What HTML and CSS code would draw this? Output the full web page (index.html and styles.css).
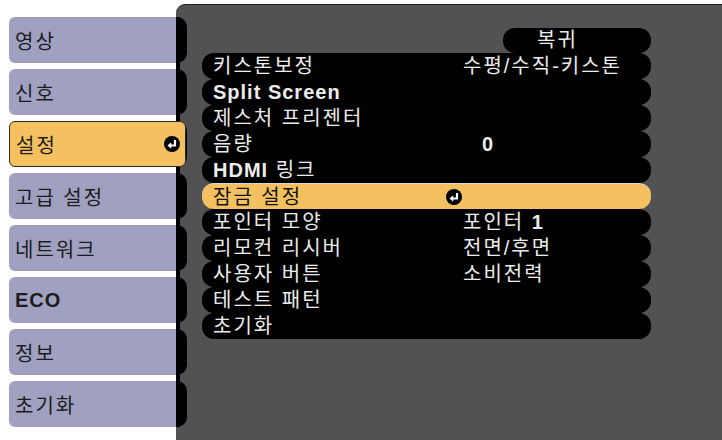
FILE: index.html
```html
<!DOCTYPE html>
<html>
<head>
	<meta charset="UTF-8">
	<title>설정 메뉴</title>
	<link rel="stylesheet" href="styles.css">
</head>
<body>
	<div class="screen">
		<nav class="tabs">
			<div class="tab">영상</div>
			<div class="tab">신호</div>
			<div class="tab active">
				<span>설정</span>
				<svg class="enter" viewBox="0 0 16 16"><circle cx="8" cy="8" r="8" fill="#000"/><path d="M11 4V9.5H6.5" stroke="#fff" stroke-width="2.2" fill="none"/><path d="M3.5 9.5L7.2 6.3V12.7Z" fill="#fff"/></svg>
			</div>
			<div class="tab">고급 설정</div>
			<div class="tab">네트워크</div>
			<div class="tab"><b class="en">ECO</b></div>
			<div class="tab">정보</div>
			<div class="tab">초기화</div>
		</nav>
		<section class="panel">
			<div class="band">
				<div class="bumps">
					<span class="bump"></span>
					<span class="bump"></span>
					<span class="bump"></span>
					<span class="bump"></span>
					<span class="bump"></span>
					<span class="bump"></span>
					<span class="bump"></span>
					<span class="bump"></span>
				</div>
			</div>
			<div class="content">
				<div class="menu">
					<div class="back">복귀</div>
					<div class="list">
						<div class="row"><span class="label">키스톤보정</span><span class="value">수평/수직-키스톤</span></div>
						<div class="row"><span class="label en"><b>Split Screen</b></span><span class="value"></span></div>
						<div class="row"><span class="label">제스처 프리젠터</span><span class="value"></span></div>
						<div class="row"><span class="label">음량</span><span class="value num"><b class="en">0</b></span></div>
						<div class="row"><span class="label"><b class="en">HDMI</b> 링크</span><span class="value"></span></div>
						<div class="row selected">
							<span class="label">잠금 설정</span>
							<span class="value icon"><svg class="enter" viewBox="0 0 16 16"><circle cx="8" cy="8" r="8" fill="#000"/><path d="M11 4V9.5H6.5" stroke="#fff" stroke-width="2.2" fill="none"/><path d="M3.5 9.5L7.2 6.3V12.7Z" fill="#fff"/></svg></span>
						</div>
						<div class="row"><span class="label">포인터 모양</span><span class="value">포인터 <b class="en">1</b></span></div>
						<div class="row"><span class="label">리모컨 리시버</span><span class="value">전면/후면</span></div>
						<div class="row"><span class="label">사용자 버튼</span><span class="value">소비전력</span></div>
						<div class="row"><span class="label">테스트 패턴</span><span class="value"></span></div>
						<div class="row"><span class="label">초기화</span><span class="value"></span></div>
					</div>
				</div>
			</div>
		</section>
	</div>
</body>
</html>
```

FILE: styles.css
```css
body {
	margin: 0;
	padding: 0;
	background-color: #fff;
	font-family: "Liberation Sans", "Noto Sans CJK KR", sans-serif;
	font-size: 20px;
	letter-spacing: 2px;
}
.screen {
	display: flex;
	height: 440px;
	overflow: hidden;
}
.tabs {
	display: flex;
	flex-direction: column;
	gap: 6px;
	width: 167px;
	padding: 17px 0 0 9px;
	flex-shrink: 0;
}
.tab {
	display: flex;
	align-items: center;
	justify-content: space-between;
	height: 46px;
	padding-left: 6px;
	background-color: #a0a0c1;
	border-radius: 6px 0 0 6px;
	color: #1c1c1c;
	box-sizing: border-box;
}
.tab.active {
	position: relative;
	z-index: 2;
	margin-right: -10px;
	padding-right: 5px;
	background-color: #f5c160;
	border: 1px solid #2a2a2a;
	border-radius: 6px;
}
.enter {
	width: 16px;
	height: 16px;
	display: block;
}
.en {
	font-family: "Liberation Sans", sans-serif;
	letter-spacing: 1px;
}
.panel {
	display: flex;
	flex: 1;
	margin-top: 4px;
	background-color: #525254;
	border-top: 1px solid #1e1e1e;
	border-radius: 9px 0 0 0;
}
.band {
	width: 11px;
	padding-top: 12px;
	flex-shrink: 0;
}
.bumps {
	display: flex;
	flex-direction: column;
	gap: 6px;
	background: linear-gradient(to right, #000 4px, transparent 4px);
}
.bump {
	display: block;
	height: 46px;
	background-color: #000;
	border-radius: 0 10px 10px 0;
}
.content {
	padding: 23px 0 0 15px;
}
.menu {
	display: flex;
	flex-direction: column;
	width: 449px;
	color: #ececec;
}
.back {
	align-self: flex-end;
	width: 148px;
	height: 25px;
	line-height: 25px;
	padding-left: 34px;
	box-sizing: border-box;
	background-color: #000;
	border-radius: 12px;
}
.list {
	margin: 0 10px;
	background-color: #000;
}
.row {
	display: grid;
	grid-template-columns: 233px 1fr;
	align-items: center;
	height: 26px;
	line-height: 26px;
	margin: 0 -10px;
	padding-left: 11px;
	background-color: #000;
	border-radius: 12px;
	white-space: nowrap;
}
.row.selected {
	background-color: #f5c160;
	border-top: 1px solid #d8d8d8;
	color: #141414;
	box-sizing: border-box;
}
.value {
	padding-left: 17px;
}
.value.num {
	padding-left: 36px;
}
.value.icon {
	padding-left: 0;
}
```
